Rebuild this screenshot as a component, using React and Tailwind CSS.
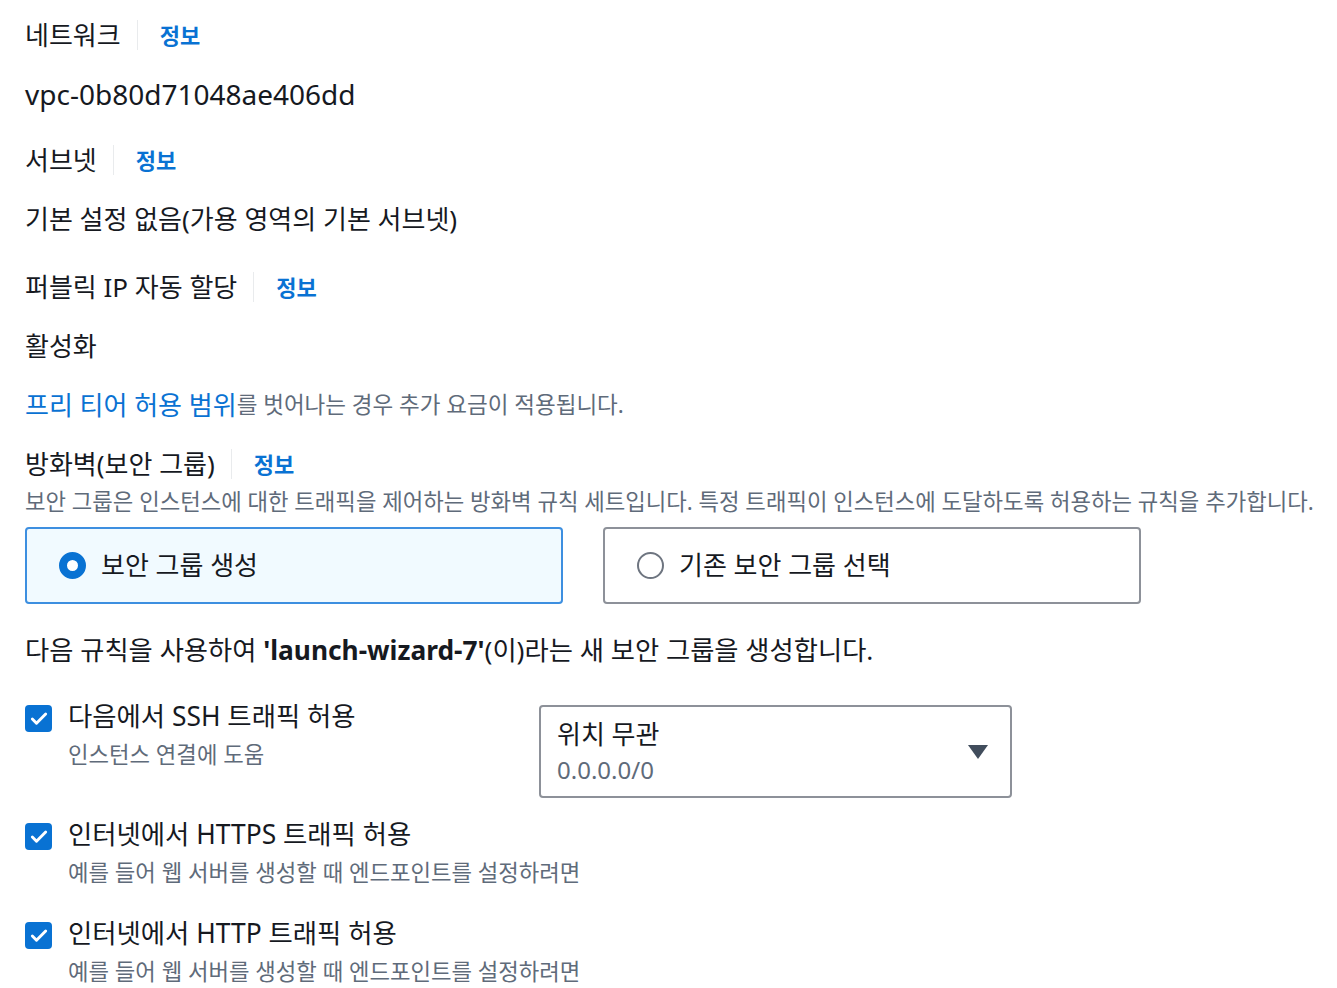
import { Check } from "lucide-react";

const font = { fontFamily: '"Noto Sans", "Noto Sans CJK KR", sans-serif' };

function Label({ text, mt }) {
  return (
    <div className={`flex items-center h-[40px] ${mt}`}>
      <span className="text-[26px] text-[#16191f]">{text}</span>
      <span className="ml-[16px] mr-[22px] w-px h-[30px] bg-[#e9ebed]" />
      <span className="text-[22px] font-bold text-[#0972d3]">정보</span>
    </div>
  );
}

function Value({ children, mt = "mt-[19px]" }) {
  return (
    <div className={`flex items-center h-[40px] text-[26px] text-[#16191f] whitespace-nowrap ${mt}`}>
      {children}
    </div>
  );
}

function CheckRow({ title, sub, mt }) {
  return (
    <div className={`flex ${mt}`}>
      <div className="w-[27px] h-[27px] rounded-[4px] bg-[#0972d3] flex items-center justify-center shrink-0">
        <Check size={20} strokeWidth={3.5} color="white" />
      </div>
      <div className="ml-[16px] -mt-[6px]">
        <div className="text-[26.4px] leading-[34px] text-[#16191f] whitespace-nowrap">{title}</div>
        <div className="text-[22.3px] leading-[30px] mt-[7px] text-[#5f6b7a] whitespace-nowrap">{sub}</div>
      </div>
    </div>
  );
}

export default function App() {
  return (
    <div className="w-[1337px] h-[988px] bg-white overflow-hidden pl-[25px] pt-[15px]" style={font}>
      <Label text="네트워크" mt="" />
      <Value>
        <span className="text-[28px]">vpc-0b80d71048ae406dd</span>
      </Value>
      <Label text="서브넷" mt="mt-[26px]" />
      <Value>기본 설정 없음(가용 영역의 기본 서브넷)</Value>
      <Label text="퍼블릭 IP 자동 할당" mt="mt-[28px]" />
      <Value>활성화</Value>
      <div className="flex items-center h-[40px] mt-[19px] text-[22.5px] text-[#5f6b7a] whitespace-nowrap">
        <span className="text-[26px] text-[#0972d3]">프리 티어 허용 범위</span>
        를 벗어나는 경우 추가 요금이 적용됩니다.
      </div>
      <Label text="방화벽(보안 그룹)" mt="mt-[19px]" />
      <div className="flex items-center h-[30px] mt-[3px] text-[22.3px] text-[#5f6b7a] whitespace-nowrap">
        보안 그룹은 인스턴스에 대한 트래픽을 제어하는 방화벽 규칙 세트입니다. 특정 트래픽이 인스턴스에 도달하도록 허용하는 규칙을 추가합니다.
      </div>

      <div className="flex gap-[40px] mt-[10px]">
        <div className="w-[538px] h-[77px] rounded-[4px] border-2 border-[#3d8fe0] bg-[#f1faff] flex items-center pl-[32px]">
          <span className="w-[27px] h-[27px] rounded-full border-[8px] border-[#0972d3] bg-white" />
          <span className="ml-[15px] text-[26px] text-[#16191f]">보안 그룹 생성</span>
        </div>
        <div className="w-[538px] h-[77px] rounded-[4px] border-2 border-[#8d9199] bg-white flex items-center pl-[32px]">
          <span className="w-[27px] h-[27px] rounded-full border-2 border-[#6e7580] bg-white" />
          <span className="ml-[15px] text-[26px] text-[#16191f]">기존 보안 그룹 선택</span>
        </div>
      </div>

      <Value mt="mt-[27px]">
        <span className="text-[26.3px]">
          다음 규칙을 사용하여 <b className="font-bold">'launch-wizard-7'</b>(이)라는 새 보안 그룹을 생성합니다.
        </span>
      </Value>

      <div className="flex mt-[34px]">
        <div className="w-[514px]">
          <CheckRow title="다음에서 SSH 트래픽 허용" sub="인스턴스 연결에 도움" mt="" />
        </div>
        <div className="w-[473px] h-[93px] rounded-[4px] border-2 border-[#8d9199] flex items-center justify-between pl-[16px] pr-[22px]">
          <div>
            <div className="text-[26px] leading-[34px] text-[#16191f]">위치 무관</div>
            <div className="text-[24px] leading-[32px] mt-[3px] text-[#5f6b7a]">0.0.0.0/0</div>
          </div>
          <svg width="20" height="14" viewBox="0 0 20 14">
            <path d="M0 0 H20 L10 14 Z" fill="#414d5c" />
          </svg>
        </div>
      </div>
      <CheckRow title="인터넷에서 HTTPS 트래픽 허용" sub="예를 들어 웹 서버를 생성할 때 엔드포인트를 설정하려면" mt="mt-[25px]" />
      <CheckRow title="인터넷에서 HTTP 트래픽 허용" sub="예를 들어 웹 서버를 생성할 때 엔드포인트를 설정하려면" mt="mt-[34px]" />
    </div>
  );
}
